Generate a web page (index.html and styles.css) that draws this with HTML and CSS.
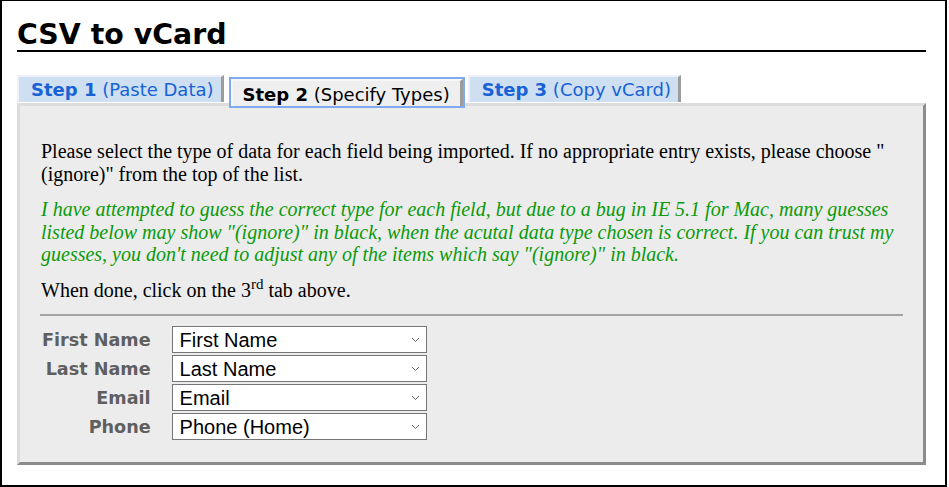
FILE: index.html
```html
<!DOCTYPE html>
<html>
<head>
<meta charset="utf-8">
<title>CSV to vCard</title>
<link rel="stylesheet" href="styles.css">
</head>
<body>
<div class="frame">
  <h1 class="title">CSV to vCard</h1>
  <div class="tabs">
    <div class="tab"><b>Step 1</b> (Paste Data)</div>
    <div class="tab active"><b>Step 2</b> (Specify Types)</div>
    <div class="tab"><b>Step 3</b> (Copy vCard)</div>
  </div>
  <div class="panel">
    <p class="para">Please select the type of data for each field being imported. If no appropriate entry exists, please choose "(ignore)" from the top of the list.</p>
    <p class="para note">I have attempted to guess the correct type for each field, but due to a bug in IE 5.1 for Mac, many guesses listed below may show "(ignore)" in black, when the acutal data type chosen is correct. If you can trust my guesses, you don't need to adjust any of the items which say "(ignore)" in black.</p>
    <p class="para">When done, click on the 3<sup>rd</sup> tab above.</p>
    <hr class="rule">
    <div class="fields">
      <label class="lbl">First Name</label>
      <select class="sel"><option>First Name</option></select>
      <label class="lbl">Last Name</label>
      <select class="sel"><option>Last Name</option></select>
      <label class="lbl">Email</label>
      <select class="sel"><option>Email</option></select>
      <label class="lbl">Phone</label>
      <select class="sel"><option>Phone (Home)</option></select>
    </div>
  </div>
</div>
</body>
</html>
```

FILE: styles.css
```css
html, body {
  margin: 0;
  padding: 0;
  background: #fff;
}
.frame {
  box-sizing: border-box;
  width: 947px;
  height: 487px;
  border: 2px solid #000;
  border-top-width: 1px;
  padding: 18px 19px 0 15px;
}
.title {
  margin: 0;
  font-family: "DejaVu Sans", Verdana, sans-serif;
  font-weight: bold;
  font-size: 28.4px;
  line-height: 31px;
  color: #000;
  border-bottom: 2px solid #000;
}
.tabs {
  display: flex;
  align-items: flex-end;
  gap: 6px;
  margin-top: 23px;
  margin-bottom: 1px;
}
.tab {
  font-family: "DejaVu Sans", Verdana, sans-serif;
  font-size: 18px;
  line-height: 20px;
  color: #1862d6;
  background: #cedff1;
  border-top: 2px solid #eeeffb;
  border-left: 2px solid #eeeffb;
  border-right: 3px solid #9c9c9c;
  padding: 3px 7px 2px 12px;
}
.tab b {
  font-weight: bold;
}
.tab.active {
  position: relative;
  z-index: 1;
  color: #000;
  background: #efefef;
  border-top-color: #f6f6f6;
  border-left-color: #f6f6f6;
  outline: 2px solid #80aaf0;
  padding: 4px 10px 1px 10px;
  margin-left: 1px;
  margin-right: -1px;
  margin-bottom: -4px;
}
.panel {
  background: #ececec;
  border: 3px solid;
  border-color: #dcdcdc #8c8c8c #8c8c8c #dcdcdc;
  padding: 21px 21px 22px 21px;
}
.para {
  margin: 13px 0 0 0;
  font-family: "Liberation Serif", "Times New Roman", serif;
  font-size: 20px;
  line-height: 22.5px;
  color: #000;
}
.note {
  color: #0a9a0a;
  font-style: italic;
}
.para sup {
  font-size: 15px;
  line-height: 0;
}
.rule {
  margin: 13px -1px 0 -1px;
  border: 0;
  border-top: 2px solid #a3a3a3;
  height: 0;
}
.fields {
  display: grid;
  grid-template-columns: auto 255px;
  justify-content: start;
  column-gap: 21px;
  row-gap: 2px;
  margin-top: 10px;
  margin-left: 1px;
  align-items: center;
}
.lbl {
  font-family: "DejaVu Sans", Verdana, sans-serif;
  font-weight: bold;
  font-size: 17.6px;
  color: #5f5f5f;
  text-align: right;
}
.sel {
  appearance: none;
  -webkit-appearance: none;
  font-family: "Liberation Sans", Arial, sans-serif;
  font-size: 20px;
  height: 27px;
  border: 1px solid #767676;
  border-radius: 0;
  background-color: #fff;
  background-image: url("data:image/svg+xml;utf8,<svg xmlns='http://www.w3.org/2000/svg' width='9' height='6' viewBox='0 0 9 6'><path d='M1 1 L4.5 4.5 L8 1' fill='none' stroke='%23666' stroke-width='1'/></svg>");
  background-repeat: no-repeat;
  background-position: right 6px center;
  color: #000;
  padding: 0 20px 0 7px;
  margin: 0;
}
```
